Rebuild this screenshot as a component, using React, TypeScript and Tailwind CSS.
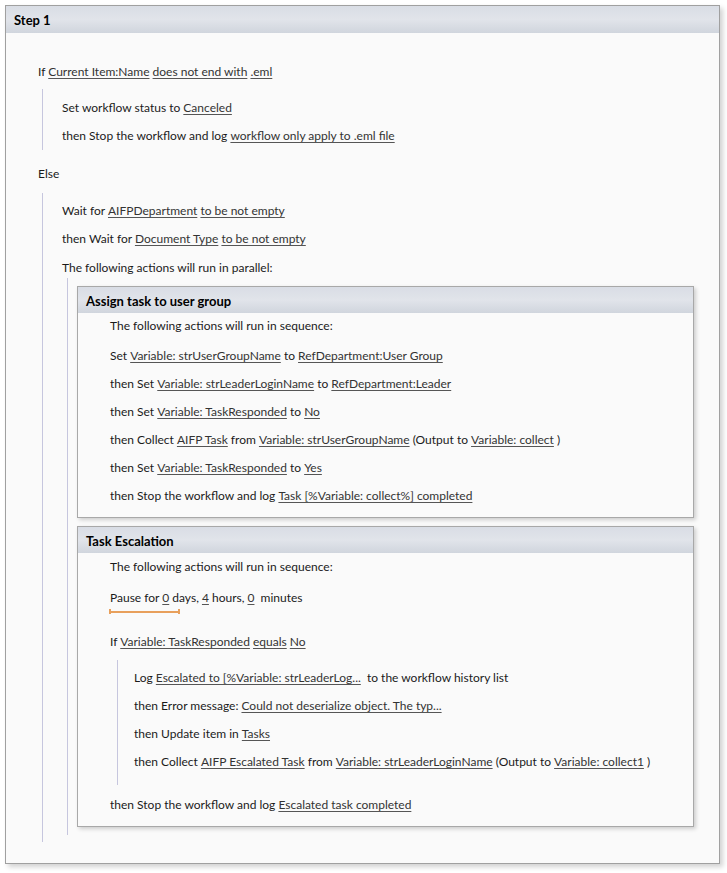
import React from 'react';

type Part = string | { link: string };

const L = (link: string): Part => ({ link });

function Line({ parts, className = '', h = 'h-[28px]' }: { parts: Part[]; className?: string; h?: string }) {
    return (
        <div className={`${h} flex items-center whitespace-pre ${className}`}>
            {parts.map((p, i) =>
                typeof p === 'string' ? (
                    <span key={i}>{p}</span>
                ) : (
                    <span key={i} className="underline underline-offset-2 decoration-[#555] text-[#333]">
                        {p.link}
                    </span>
                )
            )}
        </div>
    );
}

function Box({ title, children }: { title: string; children: React.ReactNode }) {
    return (
        <div className="w-[617px] border border-[#a8a8a8] bg-[#fafafa] shadow-[2px_2px_4px_rgba(0,0,0,0.18)]">
            <div className="h-[26px] flex items-center pl-[8px] pt-[4px] text-[13px] font-bold text-black bg-[linear-gradient(to_bottom,#d9dde5_0%,#e1e4ea_50%,#d0d5dd_100%)]">
                {title}
            </div>
            <div className="pl-[32px] pb-[7px]">{children}</div>
        </div>
    );
}

export default function App() {
    return (
        <div className="min-h-screen bg-white pt-[5px] pl-[5px] text-[12px] text-[#1a1a1a] font-['Lato','Liberation_Sans',sans-serif]">
            <div className="w-[715px] h-[859px] border border-[#a0a0a0] bg-[#fafafa] shadow-[3px_3px_5px_rgba(0,0,0,0.18)]">
                {/* Step header */}
                <div className="h-[27px] flex items-center pl-[8px] pt-[3px] text-[13px] font-bold text-black bg-[linear-gradient(to_bottom,#d9dde5_0%,#e1e4ea_50%,#d0d5dd_100%)]">
                    Step 1
                </div>

                <div className="pl-[32px] pt-[25px]">
                    <Line parts={['If ', L('Current Item:Name'), ' ', L('does not end with'), ' ', L('.eml')]} />
                    <div className="mt-[3px] ml-[4px] border-l border-[#c6c6de] pl-[19px] pt-[5px]">
                        <Line parts={['Set workflow status to ', L('Canceled')]} />
                        <Line parts={['then Stop the workflow and log ', L('workflow only apply to .eml file')]} />
                    </div>

                    <Line className="mt-[10px]" parts={['Else']} />
                    <div className="mt-[5px] ml-[4px] border-l border-[#c6c6de] pl-[19px] pt-[4px] pb-[7px]">
                        <Line parts={['Wait for ', L('AIFPDepartment'), ' ', L('to be not empty')]} />
                        <Line parts={['then Wait for ', L('Document Type'), ' ', L('to be not empty')]} />
                        <Line className="mt-[1px]" parts={['The following actions will run in parallel:']} />

                        <div className="-mt-[4px] ml-[5px] border-l border-[#c6c6de] pl-[9px] pt-[8px] pb-[8px] flex flex-col gap-[8px]">
                            <Box title="Assign task to user group">
                                <Line h="h-[26px]" parts={['The following actions will run in sequence:']} />
                                <div className="mt-[3px]">
                                    <Line parts={['Set ', L('Variable: strUserGroupName'), ' to ', L('RefDepartment:User Group')]} />
                                    <Line parts={['then Set ', L('Variable: strLeaderLoginName'), ' to ', L('RefDepartment:Leader')]} />
                                    <Line parts={['then Set ', L('Variable: TaskResponded'), ' to ', L('No')]} />
                                    <Line
                                        parts={[
                                            'then Collect ',
                                            L('AIFP Task'),
                                            ' from ',
                                            L('Variable: strUserGroupName'),
                                            ' (Output to ',
                                            L('Variable: collect'),
                                            ' )',
                                        ]}
                                    />
                                    <Line parts={['then Set ', L('Variable: TaskResponded'), ' to ', L('Yes')]} />
                                    <Line parts={['then Stop the workflow and log ', L('Task [%Variable: collect%] completed')]} />
                                </div>
                            </Box>

                            <Box title="Task Escalation">
                                <Line parts={['The following actions will run in sequence:']} />
                                <div className="mt-[7px] w-fit flex flex-col">
                                    <Line h="h-[20px]" parts={['Pause for ', L('0'), ' days, ', L('4'), ' hours, ', L('0'), '  minutes']} />
                                    <div className="mt-[1px] -ml-[1px] w-[71px] h-[5px] flex items-center">
                                        <div className="w-[2px] h-[5px] bg-[#e8a05c]" />
                                        <div className="flex-1 h-[2px] bg-[#e8a05c]" />
                                        <div className="w-[2px] h-[5px] bg-[#e8a05c]" />
                                    </div>
                                </div>
                                <Line className="mt-[14px]" parts={['If ', L('Variable: TaskResponded'), ' ', L('equals'), ' ', L('No')]} />
                                <div className="mt-[4px] ml-[7px] border-l border-[#c6c6de] pl-[16px] pt-[4px] pb-[9px]">
                                    <Line parts={['Log ', L('Escalated to [%Variable: strLeaderLog...'), '  to the workflow history list']} />
                                    <Line parts={['then Error message: ', L('Could not deserialize object. The typ...')]} />
                                    <Line parts={['then Update item in ', L('Tasks')]} />
                                    <Line
                                        parts={[
                                            'then Collect ',
                                            L('AIFP Escalated Task'),
                                            ' from ',
                                            L('Variable: strLeaderLoginName'),
                                            ' (Output to ',
                                            L('Variable: collect1'),
                                            ' )',
                                        ]}
                                    />
                                </div>
                                <Line className="mt-[6px]" parts={['then Stop the workflow and log ', L('Escalated task completed')]} />
                            </Box>
                        </div>
                    </div>
                </div>
            </div>
        </div>
    );
}
